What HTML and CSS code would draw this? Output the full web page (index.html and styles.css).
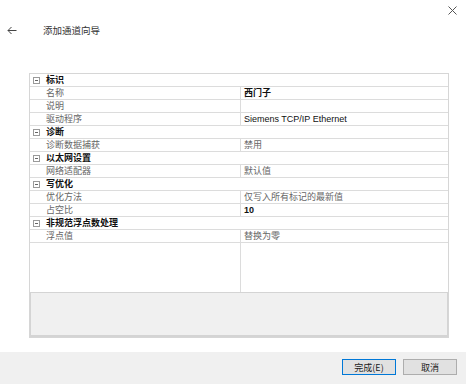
FILE: index.html
```html
<!DOCTYPE html>
<html lang="zh">
<head>
<meta charset="utf-8">
<link rel="stylesheet" href="styles.css">
</head>
<body>
<div class="page">
  <div class="chrome">
    <svg class="close" width="9" height="9" viewBox="0 0 9 9"><path d="M0.5 0.5L8.5 8.5M8.5 0.5L0.5 8.5" stroke="#555" stroke-width="1" fill="none"/></svg>
  </div>
  <div class="head">
    <svg class="back" width="10" height="9" viewBox="0 0 10 9"><path d="M9.5 4.5H1M4.5 1L1 4.5L4.5 8" stroke="#444" stroke-width="1" fill="none"/></svg>
    <span class="title">添加通道向导</span>
  </div>
  <div class="grid">
    <div class="props">
      <div class="group"><span class="tog"></span>标识</div>
      <div class="row"><div class="k">名称</div><div class="v strong">西门子</div></div>
      <div class="row"><div class="k">说明</div><div class="v"></div></div>
      <div class="row"><div class="k">驱动程序</div><div class="v latin">Siemens TCP/IP Ethernet</div></div>
      <div class="group"><span class="tog"></span>诊断</div>
      <div class="row"><div class="k">诊断数据捕获</div><div class="v">禁用</div></div>
      <div class="group"><span class="tog"></span>以太网设置</div>
      <div class="row"><div class="k">网络适配器</div><div class="v">默认值</div></div>
      <div class="group"><span class="tog"></span>写优化</div>
      <div class="row"><div class="k">优化方法</div><div class="v">仅写入所有标记的最新值</div></div>
      <div class="row"><div class="k">占空比</div><div class="v strong latin">10</div></div>
      <div class="group"><span class="tog"></span>非规范浮点数处理</div>
      <div class="row"><div class="k">浮点值</div><div class="v">替换为零</div></div>
      <div class="filler"><div></div><div class="fv"></div></div>
    </div>
    <div class="desc"></div>
  </div>
  <div class="spacer"></div>
  <div class="footer">
    <button class="btn primary">完成(E)</button>
    <button class="btn">取消</button>
  </div>
</div>
</body>
</html>
```
FILE: styles.css
```css
html, body {
  margin: 0;
  padding: 0;
  background: #fff;
}
body {
  font-family: "Noto Sans CJK SC", "Liberation Sans", sans-serif;
  font-size: 9px;
  color: #333;
}
.page {
  width: 466px;
  height: 384px;
  display: flex;
  flex-direction: column;
}
.chrome {
  height: 20px;
  display: flex;
  justify-content: flex-end;
  align-items: flex-start;
  padding: 6px 9px 0 0;
  box-sizing: border-box;
}
.head {
  height: 20px;
  display: flex;
  align-items: center;
  padding-left: 7px;
}
.back {
  margin-right: 26px;
}
.title {
  font-size: 9.5px;
  color: #333;
}
.grid {
  margin: 33px 17px 0 29px;
  border: 1px solid #d6d6d6;
  display: flex;
  flex-direction: column;
}
.props {
  height: 218px;
  display: flex;
  flex-direction: column;
}
.group {
  height: 13px;
  box-sizing: border-box;
  border-bottom: 1px solid #dcdcdc;
  display: flex;
  align-items: center;
  padding-left: 3px;
  font-weight: bold;
  color: #111;
  line-height: 12px;
}
.tog {
  width: 7px;
  height: 7px;
  border: 1px solid #9a9a9a;
  box-sizing: border-box;
  margin-right: 6px;
  position: relative;
  background: #fff;
}
.tog::after {
  content: "";
  position: absolute;
  left: 1px;
  right: 1px;
  top: 2px;
  height: 1px;
  background: #666;
}
.row {
  height: 13px;
  box-sizing: border-box;
  border-bottom: 1px solid #dcdcdc;
  display: grid;
  grid-template-columns: 210px 1fr;
  line-height: 12px;
}
.k {
  padding-left: 16px;
  color: #666;
}
.v {
  border-left: 1px solid #dcdcdc;
  padding-left: 3px;
  color: #666;
  white-space: nowrap;
}
.v.strong {
  color: #111;
  font-weight: bold;
}
.v.latin {
  font-family: "Liberation Sans", sans-serif;
  color: #111;
}
.filler {
  flex: 1;
  display: grid;
  grid-template-columns: 210px 1fr;
}
.fv {
  border-left: 1px solid #dcdcdc;
}
.desc {
  height: 42px;
  background: #f0f0f0;
  border: 1px solid #d4d4d4;
  border-bottom-width: 2px;
}
.spacer {
  flex: 1;
}
.footer {
  height: 32px;
  background: #f0f0f0;
  display: flex;
  justify-content: flex-end;
  align-items: flex-start;
  padding: 7px 9px 0 0;
  box-sizing: border-box;
  gap: 7px;
}
.btn {
  width: 54px;
  height: 16px;
  padding: 0;
  border: 1px solid #adadad;
  background: #e1e1e1;
  font-family: "Noto Sans CJK SC", sans-serif;
  font-size: 9px;
  color: #222;
  line-height: 13px;
}
.btn.primary {
  border-color: #0078d7;
}
```
